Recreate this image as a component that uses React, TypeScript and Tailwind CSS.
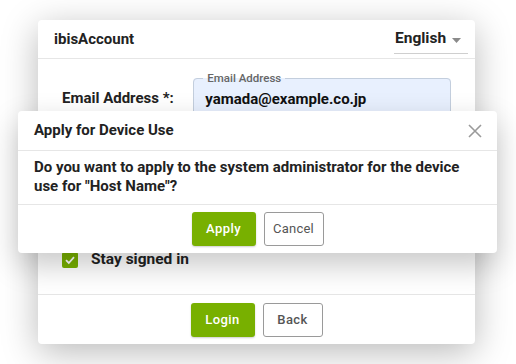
import React from "react";

function Field({ label, legend, value }: { label: string; legend: string; value: string }) {
  return (
    <div className="flex items-start">
      <div className="w-[132px] pt-[17px] text-[15px] font-bold leading-[20px] text-[#222]">{label}</div>
      <fieldset className="h-[47px] w-[259px] rounded-[4px] border border-[#c3cedd] bg-[#e8f0fe] pl-[11px]">
        <legend className="ml-[-2px] px-[4px] text-[11.5px] font-medium leading-[14px] text-[#666]">{legend}</legend>
        <div className="pt-[4px] text-[15px] font-bold leading-[20px] text-[#111]">{value}</div>
      </fieldset>
    </div>
  );
}

export default function App() {
  return (
    <div
      className="relative h-[364px] w-[516px] overflow-hidden bg-white pl-[38px] pt-[20px]"
      style={{ fontFamily: "Roboto, 'Liberation Sans', sans-serif" }}
    >
      <div className="flex h-[324px] w-[437px] flex-col rounded-[4px] bg-white shadow-[0_8px_36px_rgba(0,0,0,0.28)]">
        <div className="flex h-[39px] items-center justify-between border-b border-[#e6e6e6] pl-4 pr-[7px]">
          <div className="text-[15px] font-bold text-[#222]">ibisAccount</div>
          <div className="mb-[4px] flex h-[30px] w-[74px] items-center justify-between self-end border-b border-[#cfcfcf] pl-[1px] pr-[7px]">
            <span className="text-[15.5px] font-bold text-[#222]">English</span>
            <svg width="9" height="5" viewBox="0 0 9 5" className="mt-[3px]">
              <path d="M0 0 L9 0 L4.5 5 Z" fill="#8a8a8a" />
            </svg>
          </div>
        </div>
        <div className="flex flex-1 flex-col px-6 pb-[25px] pt-3">
          <Field label="Email Address *:" legend="Email Address" value="yamada@example.co.jp" />
          <div className="mt-auto flex h-[18px] items-center gap-[13px]">
            <div className="flex h-[16px] w-[16px] items-center justify-center rounded-[2px] bg-[#78b000]">
              <svg width="12" height="12" viewBox="0 0 12 12">
                <path d="M2 6.2 L4.8 9 L10 3.2" fill="none" stroke="white" strokeWidth="1.8" />
              </svg>
            </div>
            <span className="text-[15.5px] font-bold text-[#222]">Stay signed in</span>
          </div>
        </div>
        <div className="flex justify-center gap-2 border-t border-[#e6e6e6] pb-[7px] pt-[8px]">
          <button className="h-[34px] w-[64px] rounded-[3px] bg-[#78b000] text-[13px] font-medium tracking-[0.4px] text-white shadow-[0_1px_2px_rgba(0,0,0,0.2)]">
            Login
          </button>
          <button className="h-[34px] w-[60px] rounded-[3px] border border-[#9a9a9a] bg-white text-[13px] font-medium tracking-[0.4px] text-[#555]">
            Back
          </button>
        </div>
      </div>

      <div className="absolute left-[18px] top-[111px] w-[479px] rounded-[4px] bg-white shadow-[0_12px_30px_rgba(0,0,0,0.22)]">
        <div className="flex h-[40px] items-center justify-between border-b border-[#e6e6e6] pl-4 pr-[15px]">
          <span className="text-[15px] font-bold text-[#222]">Apply for Device Use</span>
          <svg width="14" height="14" viewBox="0 0 14 14">
            <path d="M1 1 L13 13 M13 1 L1 13" stroke="#9a9a9a" strokeWidth="1.6" fill="none" />
          </svg>
        </div>
        <div className="px-4 pb-[8px] pt-[7px] text-[15px] font-bold leading-[19px] text-[#222]">
          Do you want to apply to the system administrator for the device use for "Host Name"?
        </div>
        <div className="flex justify-center gap-2 border-t border-[#e6e6e6] pb-[7px] pt-[7px]">
          <button className="h-[34px] w-[64px] rounded-[3px] bg-[#78b000] text-[13px] font-medium tracking-[0.4px] text-white shadow-[0_1px_2px_rgba(0,0,0,0.2)]">
            Apply
          </button>
          <button className="h-[34px] w-[60px] rounded-[3px] border border-[#9a9a9a] bg-white text-[13px] tracking-[0.2px] text-[#555]">
            Cancel
          </button>
        </div>
      </div>
    </div>
  );
}
